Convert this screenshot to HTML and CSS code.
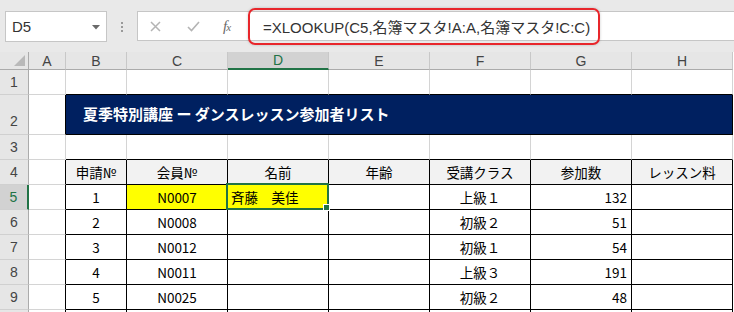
FILE: index.html
```html
<!DOCTYPE html>
<html>
<head>
    <meta charset="utf-8">
    <link rel="stylesheet" href="styles.css">
</head>
<body>

<div class="topbar">
    <div class="namebox">
        <span>D5</span>
        <svg class="drop" width="8" height="5" viewBox="0 0 8 5"><path d="M0 0H8L4 4.5Z" fill="#6a6a6a"/></svg>
    </div>
    <div class="grip"><i></i><i></i><i></i></div>
    <div class="fbar">
        <div class="fbtns">
            <svg class="btn-x" width="11" height="11" viewBox="0 0 11 11"><path d="M1 1L10 10M10 1L1 10" stroke="#b4b4b4" stroke-width="1.5" fill="none"/></svg>
            <svg class="btn-ok" width="13" height="11" viewBox="0 0 13 11"><path d="M1 6L4.5 9.5L12 1" stroke="#b4b4b4" stroke-width="1.6" fill="none"/></svg>
            <span class="btn-fx">f<small>x</small></span>
        </div>
        <div class="formula">=XLOOKUP(C5,名簿マスタ!A:A,名簿マスタ!C:C)</div>
    </div>
</div>

<div class="sheet">
    <!-- column headers -->
    <div class="h corner"><svg width="11" height="11" viewBox="0 0 11 11"><path d="M11 0V11H0Z" fill="#b9b9b9"/></svg></div>
    <div class="h">A</div>
    <div class="h">B</div>
    <div class="h">C</div>
    <div class="h active">D</div>
    <div class="h">E</div>
    <div class="h">F</div>
    <div class="h">G</div>
    <div class="h">H</div>

    <!-- row 1 -->
    <div class="r">1</div>
    <div class="c"></div>
    <div class="c bb"></div><div class="c bb"></div><div class="c bb"></div><div class="c bb"></div>
    <div class="c bb"></div><div class="c bb"></div><div class="c bb"></div>

    <!-- row 2 -->
    <div class="r low">2</div>
    <div class="c br"></div>
    <div class="title">夏季特別講座 ー ダンスレッスン参加者リスト</div>

    <!-- row 3 -->
    <div class="r">3</div>
    <div class="c"></div>
    <div class="c bb"></div><div class="c bb"></div><div class="c bb"></div><div class="c bb"></div>
    <div class="c bb"></div><div class="c bb"></div><div class="c bb"></div>

    <!-- row 4 -->
    <div class="r">4</div>
    <div class="c br"></div>
    <div class="k th">申請№</div>
    <div class="k th">会員№</div>
    <div class="k th">名前</div>
    <div class="k th">年齢</div>
    <div class="k th">受講クラス</div>
    <div class="k th">参加数</div>
    <div class="k th">レッスン料</div>

    <!-- row 5 -->
    <div class="r active">5</div>
    <div class="c br"></div>
    <div class="k">1</div>
    <div class="k hl">N0007</div>
    <div class="k hl left cur">斉藤　美佳<div class="selbox"></div></div>
    <div class="k"></div>
    <div class="k">上級１</div>
    <div class="k num">132</div>
    <div class="k"></div>

    <!-- row 6 -->
    <div class="r">6</div>
    <div class="c br"></div>
    <div class="k">2</div>
    <div class="k">N0008</div>
    <div class="k"></div>
    <div class="k"></div>
    <div class="k">初級２</div>
    <div class="k num">51</div>
    <div class="k"></div>

    <!-- row 7 -->
    <div class="r">7</div>
    <div class="c br"></div>
    <div class="k">3</div>
    <div class="k">N0012</div>
    <div class="k"></div>
    <div class="k"></div>
    <div class="k">初級１</div>
    <div class="k num">54</div>
    <div class="k"></div>

    <!-- row 8 -->
    <div class="r">8</div>
    <div class="c br"></div>
    <div class="k">4</div>
    <div class="k">N0011</div>
    <div class="k"></div>
    <div class="k"></div>
    <div class="k">上級３</div>
    <div class="k num">191</div>
    <div class="k"></div>

    <!-- row 9 -->
    <div class="r">9</div>
    <div class="c br"></div>
    <div class="k">5</div>
    <div class="k">N0025</div>
    <div class="k"></div>
    <div class="k"></div>
    <div class="k">初級２</div>
    <div class="k num">48</div>
    <div class="k"></div>

    <!-- row 10 (only its top edge shows) -->
    <div class="r"></div>
    <div class="c br"></div>
    <div class="k"></div><div class="k"></div><div class="k"></div><div class="k"></div>
    <div class="k"></div><div class="k"></div><div class="k"></div>
</div>

</body>
</html>
```

FILE: styles.css
```css
html, body {
    margin: 0;
    padding: 0;
    overflow: hidden;
    background-color: #fff;
    font-family: "Liberation Sans", "Noto Sans CJK JP", sans-serif;
}

/* formula bar */
.topbar {
    height: 52px;
    box-sizing: border-box;
    background-color: #e9e9e9;
    display: flex;
    align-items: flex-start;
    padding: 11px 0 0 5px;
}
.namebox {
    width: 102px;
    height: 31px;
    box-sizing: border-box;
    background-color: #fff;
    border: 1px solid #c6c6c6;
    display: flex;
    align-items: center;
    justify-content: space-between;
    padding: 0 6px 0 6px;
    font-size: 15px;
    color: #333;
}
.drop {
    margin-top: 1px;
}
.grip {
    margin-left: 14px;
    height: 31px;
    display: flex;
    flex-direction: column;
    justify-content: center;
    gap: 2px;
}
.grip i {
    display: block;
    width: 2px;
    height: 2px;
    background-color: #9a9a9a;
}
.fbar {
    flex: 1;
    margin-left: 14px;
    height: 30px;
    box-sizing: border-box;
    background-color: #fff;
    border: 1px solid #c6c6c6;
    border-right: none;
    display: flex;
    align-items: center;
}
.fbtns {
    width: 110px;
    box-sizing: border-box;
    padding-left: 12px;
    display: flex;
    align-items: center;
}
.btn-x {
    margin-right: 26px;
}
.btn-ok {
    margin-right: 23px;
}
.btn-fx {
    font-family: "Liberation Serif", serif;
    font-style: italic;
    font-size: 15px;
    color: #6a6a6a;
    letter-spacing: -1px;
}
.btn-fx small {
    font-size: 11px;
}
.formula {
    width: 352px;
    height: 37px;
    box-sizing: border-box;
    border: 2px solid #e8262b;
    border-radius: 7px;
    box-shadow: 0 0 3px rgba(0, 0, 0, 0.2);
    padding-left: 13px;
    display: flex;
    align-items: center;
    font-family: "Liberation Sans", "Noto Sans CJK JP", sans-serif;
    font-size: 15px;
    color: #333;
    white-space: nowrap;
}

/* sheet grid */
.sheet {
    display: grid;
    grid-template-columns: 29px 37px 61px repeat(6, 101px);
    grid-template-rows: 18px 25px 40px repeat(8, 25px);
    font-family: "Noto Sans CJK JP", sans-serif;
    font-size: 13.5px;
    color: #000;
}
.sheet > div {
    box-sizing: border-box;
    display: flex;
    align-items: center;
    justify-content: center;
    white-space: nowrap;
}
.h {
    background-color: #e6e6e6;
    border-right: 1px solid #c8c8c8;
    border-bottom: 1px solid #ababab;
    font-family: "Liberation Sans", sans-serif;
    font-size: 14px;
    color: #444;
}
.h.corner {
    border-right: 1px solid #ababab;
    justify-content: flex-end;
    align-items: flex-end;
    padding: 0 3px 3px 0;
}
.h.active {
    background-color: #d2d2d2;
    color: #217346;
    border-bottom: 2px solid #217346;
}
.r {
    background-color: #e6e6e6;
    border-right: 1px solid #ababab;
    border-bottom: 1px solid #d0d0d0;
    font-family: "Liberation Sans", sans-serif;
    font-size: 14px;
    color: #444;
}
.r.low {
    align-items: flex-end !important;
    padding-bottom: 5px;
}
.r.active {
    background-color: #d2d2d2;
    color: #217346;
    border-right: 2px solid #217346;
}
.c {
    border-right: 1px solid #d4d4d4;
    border-bottom: 1px solid #d4d4d4;
}
.c.bb {
    border-bottom-color: #000;
}
.c.br {
    border-right-color: #000;
}
.title {
    grid-column: span 7;
    background-color: #002060;
    border-right: 1px solid #000;
    border-bottom: 1px solid #000;
    justify-content: flex-start !important;
    padding: 0 0 3px 17px;
    color: #fff;
    font-weight: bold;
    font-size: 15px;
}
.k {
    border-right: 1px solid #000;
    border-bottom: 1px solid #000;
}
.k.th {
    background-color: #f2f2f2;
}
.k.hl {
    background-color: #ffff00;
}
.k.left {
    justify-content: flex-start !important;
    padding-left: 3px;
}
.k.num {
    justify-content: flex-end !important;
    padding-right: 4px;
}
.cur {
    position: relative;
}
.selbox {
    position: absolute;
    top: -2px;
    left: -2px;
    right: -1px;
    bottom: -1px;
    border: 2px solid #217346;
}
.selbox::after {
    content: "";
    position: absolute;
    right: -3px;
    bottom: -3px;
    width: 5px;
    height: 5px;
    background-color: #217346;
    border: 1px solid #fff;
}
```
